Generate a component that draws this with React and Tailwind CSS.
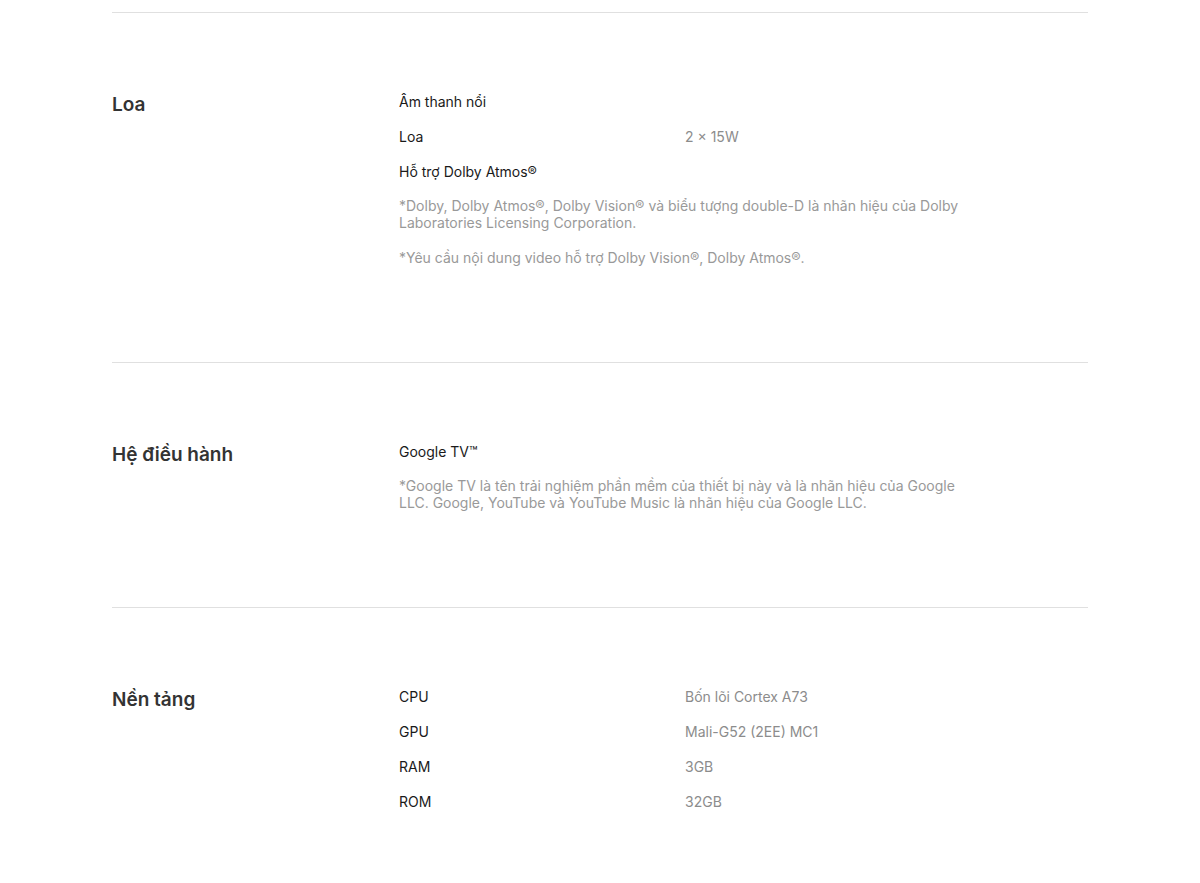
import React from 'react';

const sections = [
  {
    title: 'Loa',
    rows: [
      { label: 'Âm thanh nổi' },
      { label: 'Loa', value: '2 × 15W' },
      { label: 'Hỗ trợ Dolby Atmos®' },
    ],
    notes: [
      '*Dolby, Dolby Atmos®, Dolby Vision® và biểu tượng double-D là nhãn hiệu của Dolby Laboratories Licensing Corporation.',
      '*Yêu cầu nội dung video hỗ trợ Dolby Vision®, Dolby Atmos®.',
    ],
  },
  {
    title: 'Hệ điều hành',
    rows: [{ label: 'Google TV™' }],
    notes: [
      '*Google TV là tên trải nghiệm phần mềm của thiết bị này và là nhãn hiệu của Google LLC. Google, YouTube và YouTube Music là nhãn hiệu của Google LLC.',
    ],
  },
  {
    title: 'Nền tảng',
    rows: [
      { label: 'CPU', value: 'Bốn lõi Cortex A73' },
      { label: 'GPU', value: 'Mali-G52 (2EE) MC1' },
      { label: 'RAM', value: '3GB' },
      { label: 'ROM', value: '32GB' },
    ],
    notes: [],
  },
];

const SpecSection = ({ section }) => (
  <section className="flex border-t border-[#e0e0e0] pt-[79px] pb-[96px]">
    <h2 className="w-[287px] shrink-0 text-[19px] leading-[26px] font-semibold text-[#333]">
      {section.title}
    </h2>
    <div className="flex-1">
      <div className="flex flex-col gap-[15px]">
        {section.rows.map((row) => (
          <div key={row.label} className="flex text-[14px] leading-5">
            <span className="w-[286px] shrink-0 text-[#1a1a1a]">{row.label}</span>
            {row.value && <span className="text-[#8c8c8c]">{row.value}</span>}
          </div>
        ))}
      </div>
      {section.notes.length > 0 && (
        <div className="mt-[15px] flex w-[570px] flex-col gap-[18px]">
          {section.notes.map((note) => (
            <p key={note} className="text-[14px] leading-[17px] text-[#999]">
              {note}
            </p>
          ))}
        </div>
      )}
    </div>
  </section>
);

export default function App() {
  return (
    <div className="min-h-screen bg-white pt-3" style={{ fontFamily: 'Inter, "Noto Sans", sans-serif' }}>
      <div className="mx-auto w-[976px]">
        {sections.map((s) => (
          <SpecSection key={s.title} section={s} />
        ))}
      </div>
    </div>
  );
}
